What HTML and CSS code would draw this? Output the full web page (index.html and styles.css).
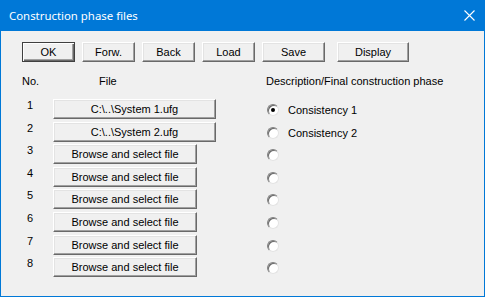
FILE: index.html
```html
<!DOCTYPE html>
<html lang="en">
  <head>
    <meta charset="utf-8" />
    <title>Construction phase files</title>
    <link rel="stylesheet" href="styles.css">
  </head>
  <body>
    <div class="dialog">
      <div class="titlebar">
        <span class="title">Construction phase files</span>
        <svg class="close" width="11" height="11" viewBox="0 0 11 11">
          <path d="M0.5 0.5 L10.5 10.5 M10.5 0.5 L0.5 10.5" stroke="#fff" stroke-width="1.1" fill="none" />
        </svg>
      </div>
      <div class="body">
        <div class="toolbar">
          <button class="btn btn-default w53" type="button">OK</button>
          <button class="btn w53" type="button">Forw.</button>
          <button class="btn w53" type="button">Back</button>
          <button class="btn w53" type="button">Load</button>
          <button class="btn w63" type="button">Save</button>
          <button class="btn w72 spaced" type="button">Display</button>
        </div>

        <div class="phases">
          <div class="head no">No.</div>
          <div class="head file">File</div>
          <div class="head desc">Description/Final construction phase</div>

          <div class="num">1</div>
          <div><button class="btn file-btn wide" type="button">C:\..\System 1.ufg</button></div>
          <div class="opt"><span class="radio checked"></span><span class="label">Consistency 1</span></div>

          <div class="num">2</div>
          <div><button class="btn file-btn wide" type="button">C:\..\System 2.ufg</button></div>
          <div class="opt"><span class="radio"></span><span class="label">Consistency 2</span></div>

          <div class="num">3</div>
          <div><button class="btn file-btn" type="button">Browse and select file</button></div>
          <div class="opt"><span class="radio"></span></div>

          <div class="num">4</div>
          <div><button class="btn file-btn" type="button">Browse and select file</button></div>
          <div class="opt"><span class="radio"></span></div>

          <div class="num">5</div>
          <div><button class="btn file-btn" type="button">Browse and select file</button></div>
          <div class="opt"><span class="radio"></span></div>

          <div class="num">6</div>
          <div><button class="btn file-btn" type="button">Browse and select file</button></div>
          <div class="opt"><span class="radio"></span></div>

          <div class="num">7</div>
          <div><button class="btn file-btn" type="button">Browse and select file</button></div>
          <div class="opt"><span class="radio"></span></div>

          <div class="num">8</div>
          <div><button class="btn file-btn" type="button">Browse and select file</button></div>
          <div class="opt"><span class="radio"></span></div>
        </div>
      </div>
    </div>
  </body>
</html>
```

FILE: styles.css
```css
html,
body {
  margin: 0;
  padding: 0;
  background: #f0f0f0;
}
.dialog {
  width: 485px;
  height: 297px;
  box-sizing: border-box;
  border: 1px solid #0078d7;
  border-top: none;
  background: #f0f0f0;
  font-family: "Liberation Sans", Arial, sans-serif;
  font-size: 11px;
  color: #000;
}
.titlebar {
  height: 31px;
  background: #0078d7;
  color: #fff;
  display: flex;
  align-items: center;
  justify-content: space-between;
  padding: 0 10px 0 9px;
  margin: 0 -1px;
}
.titlebar .title {
  font-family: "Noto Sans", "Open Sans", sans-serif;
  font-size: 11.4px;
  margin-top: -1px;
}
.titlebar .close {
  margin-top: -1px;
}

.body {
  padding: 11px 0 0 21px;
}
.toolbar {
  display: flex;
  gap: 7px;
  height: 20px;
}
.toolbar .spaced {
  margin-left: 5px;
}

.btn {
  box-sizing: border-box;
  height: 20px;
  margin: 0;
  padding: 0;
  font-family: inherit;
  font-size: 11px;
  color: #000;
  background: #f0f0f0;
  border: 1px solid;
  border-color: #fff #696969 #696969 #fff;
  box-shadow: inset -1px -1px 0 #a0a0a0, inset 1px 1px 0 #e3e3e3;
  border-radius: 0;
}
.btn-default {
  border-color: #404040;
  box-shadow: inset 1px 1px 0 #fff, inset -1px -1px 0 #696969, inset -2px -2px 0 #a0a0a0;
}
.w53 { width: 53px; }
.w63 { width: 63px; }
.w72 { width: 72px; }

.phases {
  display: grid;
  grid-template-columns: 31px 213px auto;
  grid-template-rows: 24px repeat(8, 22.6px);
  margin-top: 13px;
  align-items: start;
}
.head {
  line-height: 12px;
}
.head.file {
  padding-left: 46px;
}
.num {
  padding-left: 5px;
  line-height: 12px;
}
.file-btn {
  width: 144px;
}
.file-btn.wide {
  width: 163px;
}
.opt {
  display: flex;
  align-items: center;
  gap: 9px;
  height: 20px;
  margin-top: 1px;
  padding-left: 1px;
}
.radio {
  box-sizing: border-box;
  width: 12px;
  height: 12px;
  border-radius: 50%;
  background: #fff;
  border: 1px solid;
  border-color: #808080 #e3e3e3 #e3e3e3 #808080;
  box-shadow: inset 1px 1px 0 #696969;
  position: relative;
}
.radio.checked::after {
  content: "";
  position: absolute;
  left: 3px;
  top: 3px;
  width: 4px;
  height: 4px;
  border-radius: 50%;
  background: #000;
}
.label {
  line-height: 12px;
}
```
